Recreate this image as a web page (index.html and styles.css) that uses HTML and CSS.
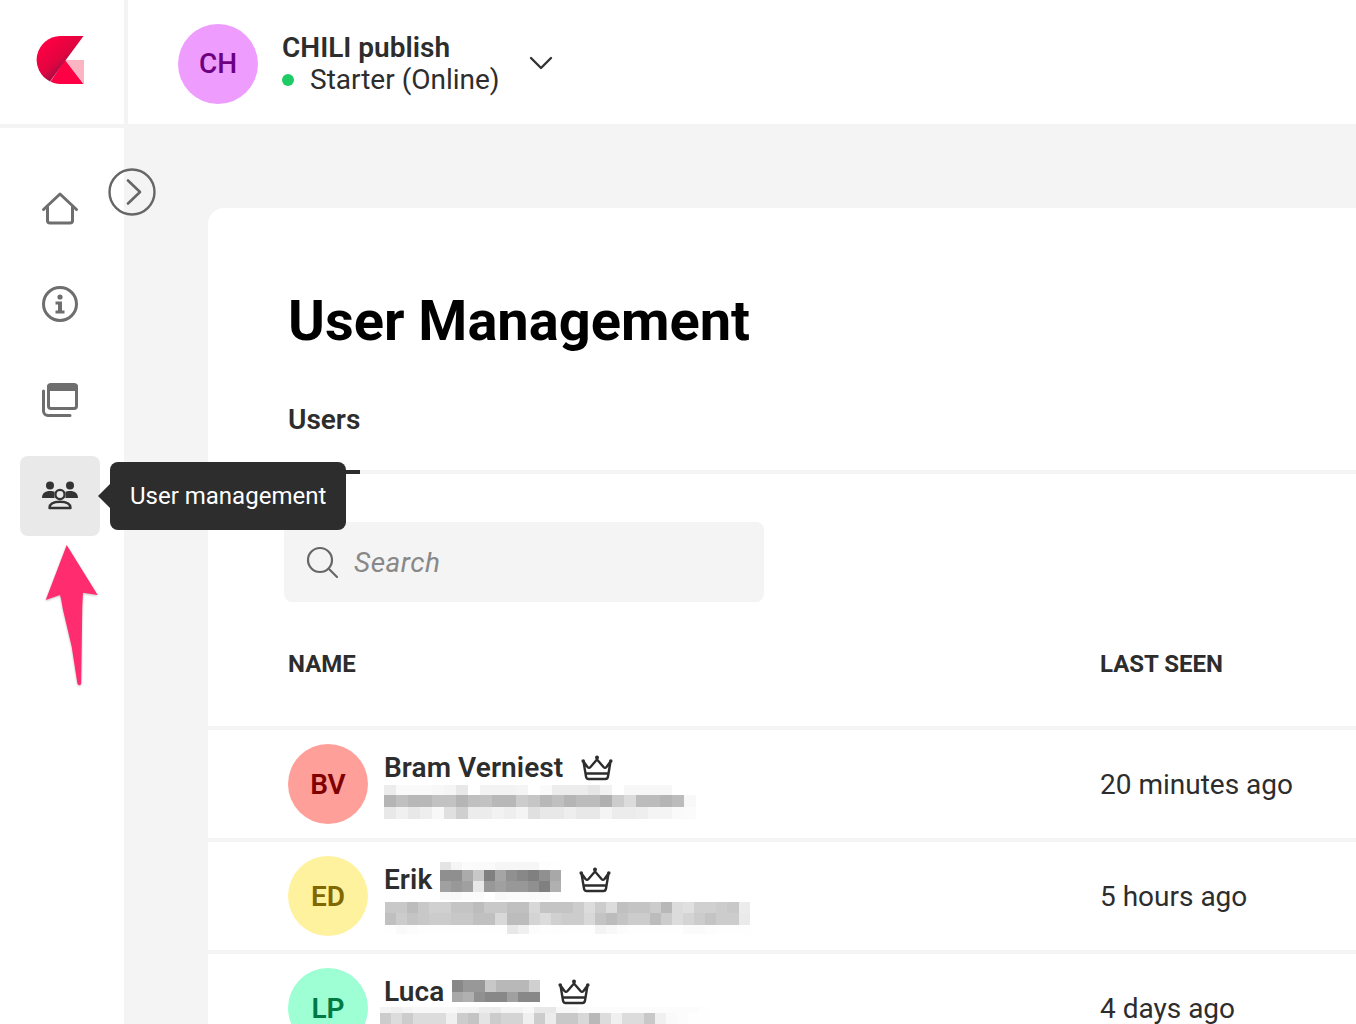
FILE: index.html
```html
<!DOCTYPE html>
<html lang="en">
<head>
<meta charset="utf-8">
<title>User Management</title>
<link rel="stylesheet" href="styles.css">
</head>
<body>
<div class="app">
  <header class="topbar">
    <div class="logo-cell">
      <svg class="logo" viewBox="0 0 48 48" width="48" height="48">
        <defs><linearGradient id="lg" x1="0.2" y1="0.25" x2="0.7" y2="0.8"><stop offset="0" stop-color="#f90042"/><stop offset="0.5" stop-color="#e0053f"/><stop offset="1" stop-color="#8c0d4b"/></linearGradient></defs>
        <path d="M29 24H48V48Z" fill="#fbb4c2"/>
        <path d="M29 24L47.500 48H24C20 48 17 47 14.500 45.500Z" fill="#ff0044"/>
        <path d="M47.500 0H24A24 24 0 0 0 14 45.500Z" fill="url(#lg)"/>
      </svg>
    </div>
    <div class="account">
      <div class="avatar avatar-ch">CH</div>
      <div class="account-text">
        <div class="account-name">CHILI publish</div>
        <div class="account-plan"><span class="dot"></span>Starter (Online)</div>
      </div>
      <svg class="chevron-down" viewBox="0 0 24 24" width="24" height="24"><path d="M2 7l10 10L22 7" fill="none" stroke="#333" stroke-width="2.400" stroke-linecap="round" stroke-linejoin="round"/></svg>
    </div>
  </header>
  <div class="body-row">
    <nav class="sidebar">
      <a class="nav-item">
        <svg viewBox="0 0 40 40" width="40" height="40"><path d="M3.500 21.500L20 6l16.500 15.500M7.500 19v13.500a2.500 2.500 0 0 0 2.500 2.500h20a2.500 2.500 0 0 0 2.500-2.500V19" fill="none" stroke="#6e6e6e" stroke-width="3" stroke-linecap="round" stroke-linejoin="round"/></svg>
      </a>
      <a class="nav-item">
        <svg viewBox="0 0 40 40" width="40" height="40"><circle cx="20" cy="20" r="16.500" fill="none" stroke="#6e6e6e" stroke-width="3"/><circle cx="20" cy="13" r="2.600" fill="#6e6e6e"/><path d="M15.500 17.500h6.500v9h2.500v3h-9v-3h2.500v-6h-2.500z" fill="#6e6e6e"/></svg>
      </a>
      <a class="nav-item">
        <svg viewBox="0 0 40 40" width="40" height="40"><rect x="8.500" y="4.500" width="28" height="24" rx="2.500" fill="none" stroke="#6e6e6e" stroke-width="3"/><path d="M7 7a3 3 0 0 1 3-3h25a3 3 0 0 1 3 3v4H7z" fill="#6e6e6e"/><path d="M3.500 11v20a4.500 4.500 0 0 0 4.500 4.500h22" fill="none" stroke="#6e6e6e" stroke-width="3" stroke-linecap="round"/></svg>
      </a>
      <a class="nav-item nav-item-active">
        <svg viewBox="0 0 40 40" width="40" height="40" fill="#333"><circle cx="10" cy="9.500" r="4"/><circle cx="30" cy="9.500" r="4"/><path d="M2 22c0-4.500 3-7 8-7 2 0 3.500.3 4.700 1-.9 1.600-.9 3.700 0 6z"/><path d="M38 22c0-4.500-3-7-8-7-2 0-3.500.3-4.700 1 .9 1.600.9 3.700 0 6z"/><circle cx="20" cy="18.500" r="4.600" fill="none" stroke="#333" stroke-width="2.400"/><path d="M9.500 32c0-4.500 4.500-6.300 10.500-6.300s10.500 1.800 10.500 6.300z" fill="none" stroke="#333" stroke-width="2.400" stroke-linejoin="round"/></svg>
      </a>
    </nav>
    <main class="content">
      <section class="card">
        <h1 class="title">User Management</h1>
        <div class="tabs"><span class="tab">Users</span></div>
        <div class="search">
          <svg viewBox="0 0 32 32" width="32" height="32"><circle cx="14" cy="14" r="12" fill="none" stroke="#666" stroke-width="2.200"/><path d="M23 23l8 8" stroke="#666" stroke-width="2.200" stroke-linecap="round"/></svg>
          <span class="search-text">Search</span>
        </div>
        <div class="table-head"><span class="col-name">NAME</span><span class="col-seen">LAST SEEN</span></div>
        <div class="row">
          <div class="col-name user">
            <div class="avatar avatar-bv">BV</div>
            <div class="user-text">
              <div class="user-name">Bram Verniest<svg class="crown" viewBox="0 0 32 26" width="32" height="26"><use href="#crown"/></svg></div>
              <div class="blur blur-mail-bv" data-w="12" data-h="10 12 12" data-rows="ec fa fa fa f8 f5 e8 ff f3 f3 f3 f5 ff fa ec ec ec e6 f2 ff f7 f7 f7 f7 ff ff|b5 c0 b8 b8 c2 c2 b5 c0 c2 b8 b8 cc c6 b8 c0 b5 bc bc b0 cc dc bc bc b5 bc f8|e8 f0 e8 ee f8 e0 cf ec ec f2 ee f4 e0 e8 e8 ee e8 e8 f4 ec ec ee f4 f4 fa fb"></div>
            </div>
          </div>
          <span class="col-seen seen">20 minutes ago</span>
        </div>
        <div class="row">
          <div class="col-name user">
            <div class="avatar avatar-ed">ED</div>
            <div class="user-text">
              <div class="user-name">Erik<span class="blur blur-name-ed" data-w="11" data-h="8 11 11 8" data-rows="e4 f6 fb fa fa f6 f6 f6 f6 fd fe|8f 8f ab c8 80 a5 90 88 80 90 a8|a0 98 a0 e8 98 a0 98 98 90 80 b0|f8 f8 fb fb ff f8 fa fa fa fa fd"></span><svg class="crown" viewBox="0 0 32 26" width="32" height="26"><use href="#crown"/></svg></div>
              <div class="blur blur-mail-ed" data-w="11.060" data-h="11 12 9" data-rows="c8 c8 bc c8 d0 d0 c4 c4 bc c8 c8 c0 c0 d8 c4 c4 c4 cc dc cc dc c0 c4 c4 cc b8 dc e0 d0 d0 cc c8 ec|c0 cc c4 c8 cc cc c8 c8 c0 c0 d8 bc bc d4 dc d0 cc cc d8 c4 bc c4 cc cc bc cc dc d4 cc c4 cc cc ea|fe fa fc fe fe fe fe fe fe fe fe e8 f0 fc fe fd fe fe fe f4 f8 fc fe fe fe fe fe fb fb fd fe fe fe"></div>
            </div>
          </div>
          <span class="col-seen seen">5 hours ago</span>
        </div>
        <div class="row">
          <div class="col-name user">
            <div class="avatar avatar-lp">LP</div>
            <div class="user-text">
              <div class="user-name">Luca<span class="blur blur-name-lp" data-w="11" data-h="12 10" data-rows="88 98 98 c8 b8 b8 b8 d0|a8 b0 90 88 88 a0 88 88"></span><svg class="crown" viewBox="0 0 32 26" width="32" height="26"><use href="#crown"/></svg></div>
              <div class="blur blur-mail-lp" data-w="11" data-h="6 11" data-rows="f4 f0 f4 f8 f8 f8 f8 f4 f4 ec ec f4 f4 f8 e8 e8 f8 f8 fc fc fc fc fc fc fc fc fc fc fc fe|cc dc cc dc dc dc f0 cc c4 e4 cc d4 d4 f0 cc ec c8 c8 d8 b8 dc f0 dc dc c8 f0 fa fc fe fe"></div>
            </div>
          </div>
          <span class="col-seen seen">4 days ago</span>
        </div>
      </section>
    </main>
  </div>
  <button class="collapse" type="button" aria-label="Expand">
    <svg viewBox="0 0 48 48" width="48" height="48"><circle cx="24" cy="24" r="22.500" fill="none" stroke="#666" stroke-width="2.400"/><path d="M20 12.500L32 24 20 35.500" fill="none" stroke="#666" stroke-width="2.600" stroke-linecap="round" stroke-linejoin="round"/></svg>
  </button>
  <div class="tooltip">User management</div>
  <svg class="pointer" viewBox="0 0 54 142" width="54" height="142"><path d="M21.700 0L0.700 55L15 50C16.500 55 17 60 18 65L26.700 101.700L32.300 138C33 141 36 141 36.200 138L37.300 61.700L38 47.700L52.700 50Z" fill="#ff2d6f"/></svg>
</div>
<svg class="defs" width="0" height="0" aria-hidden="true"><symbol id="crown" viewBox="0 0 32 26"><path d="M2.500 6.500l4 5.500c1 1 2 1 3 0L16 4.500 22.500 12c1 1 2 1 3 0l4-5.500L27 21.500c-.3 1.700-1 2.500-2.500 2.500h-17c-1.500 0-2.200-.8-2.500-2.500z M6 18.500h20" fill="none" stroke="#2d2d2d" stroke-width="2.400" stroke-linejoin="round" stroke-linecap="round"/><circle cx="16" cy="2.500" r="2" fill="#2d2d2d"/><circle cx="2.200" cy="6" r="1.800" fill="#2d2d2d"/><circle cx="29.800" cy="6" r="1.800" fill="#2d2d2d"/></symbol></svg>
<script src="blur.js"></script>
</body>
</html>
```
FILE: styles.css
```css
* { box-sizing: border-box; }
html, body { margin: 0; height: 100%; }
body { font-family: Roboto, "Liberation Sans", sans-serif; color: #2d2d2d; background: #f4f4f4; overflow: hidden; }
.defs { position: absolute; }
.app { position: relative; width: 1356px; height: 1024px; overflow: hidden; display: flex; flex-direction: column; }

.topbar { display: flex; height: 124px; background: #fff; flex: none; }
.logo-cell { width: 128px; border-right: 4px solid #f4f4f4; display: flex; align-items: center; padding: 0 0 4px 36px; }
.logo { display: block; }
.account { display: flex; align-items: center; padding: 4px 0 0 50px; }
.avatar { width: 80px; height: 80px; border-radius: 50%; flex: none; display: flex; align-items: center; justify-content: center; font-size: 28px; font-weight: 600; }
.avatar-ch { background: #ee9dff; color: #6d0080; padding-bottom: 2px; font-weight: 500; }
.avatar-bv { background: #ff9f99; color: #800000; }
.avatar-ed { background: #fff29e; color: #806800; }
.avatar-lp { background: #9effd4; color: #007a45; }
.account-text { margin-left: 24px; }
.account-name { font-size: 28px; font-weight: 600; line-height: 32px; }
.account-plan { font-size: 28px; line-height: 32px; display: flex; align-items: center; }
.dot { width: 12px; height: 12px; border-radius: 50%; background: #1ecb64; margin-right: 16px; }
.chevron-down { margin-left: 29px; margin-top: -2px; }

.body-row { display: flex; flex: 1; min-height: 0; }
.sidebar { width: 124px; flex: none; background: #fff; border-top: 4px solid #f4f4f4; padding: 40px 24px 0 20px; display: flex; flex-direction: column; gap: 16px; }
.nav-item { width: 80px; height: 80px; border-radius: 8px; display: flex; align-items: center; justify-content: center; }
.nav-item-active { background: #e9e9e9; }

.content { flex: 1; padding: 84px 0 0 84px; min-width: 0; }
.card { background: #fff; border-top-left-radius: 16px; height: 100%; overflow: hidden; padding-top: 81px; }
.title { margin: 0 0 0 80px; font-size: 56px; line-height: 64px; font-weight: 700; color: #000; }
.tabs { margin-top: 48px; padding-left: 80px; height: 73px; border-bottom: 4px solid #f4f4f4; display: flex; }
.tab { font-size: 28px; font-weight: 600; line-height: 36px; height: 73px; padding-top: 1px; border-bottom: 4px solid #2d2d2d; }
.search { margin: 48px 0 0 76px; width: 480px; height: 80px; border-radius: 8px; background: #f4f4f4; display: flex; align-items: center; padding-left: 22px; }
.search-text { margin-left: 16px; font-size: 28px; font-style: italic; color: #888; letter-spacing: .5px; }
.table-head { display: flex; align-items: center; height: 128px; font-size: 24px; font-weight: 700; border-bottom: 4px solid #f4f4f4; color: #2d2d2d; }
.col-name { width: 892px; padding-left: 80px; flex: none; }
.col-seen { flex: none; }
.row { display: flex; align-items: center; height: 112px; border-bottom: 4px solid #f4f4f4; }
.user { display: flex; align-items: flex-start; height: 108px; padding-top: 14px; }
.user-text { margin: 8px 0 0 16px; }
.user-name { font-size: 28px; font-weight: 600; line-height: 32px; height: 32px; letter-spacing: .08px; display: flex; align-items: center; }
.seen { font-size: 28px; font-weight: 400; color: #2d2d2d; }
.crown { flex: none; margin-left: 18px; }
.blur { display: block; }
.blur-row { display: flex; }
.blur-cell { display: block; flex: none; }
.blur-name-ed { margin: -2px 0 -4px 8px; }
.blur-name-lp { margin: 4px 0 6px 8px; }
.blur-mail-bv { margin-top: 1px; }
.blur-mail-ed { margin: 6px 0 0 1px; }
.blur-mail-lp { margin: -1px 0 0 -4px; }

.collapse { position: absolute; left: 108px; top: 168px; width: 48px; height: 48px; padding: 0; border: 0; background: none; }
.collapse svg { display: block; }
.tooltip { position: absolute; left: 110px; top: 462px; width: 236px; height: 68px; border-radius: 8px; background: #2d2d2d; color: #fff; font-size: 24px; line-height: 68px; padding-left: 20px; }
.tooltip::before { content: ""; position: absolute; left: -12px; top: 22px; border-style: solid; border-width: 12px 12px 12px 0; border-color: transparent #2d2d2d transparent transparent; }
.pointer { position: absolute; left: 45px; top: 545px; filter: drop-shadow(0 1px 1px rgba(0,0,0,.25)); }
```
FILE: blur.js
```js
document.querySelectorAll('.blur').forEach(function (box) {
  var w = Number(box.dataset.w);
  var heights = box.dataset.h.split(' ');
  box.dataset.rows.split('|').forEach(function (row, i) {
    var line = document.createElement('span');
    line.className = 'blur-row';
    row.split(' ').forEach(function (g) {
      var cell = document.createElement('span');
      cell.className = 'blur-cell';
      cell.style.width = w + 'px';
      cell.style.height = heights[i] + 'px';
      cell.style.background = '#' + g + g + g;
      line.appendChild(cell);
    });
    box.appendChild(line);
  });
});
```
